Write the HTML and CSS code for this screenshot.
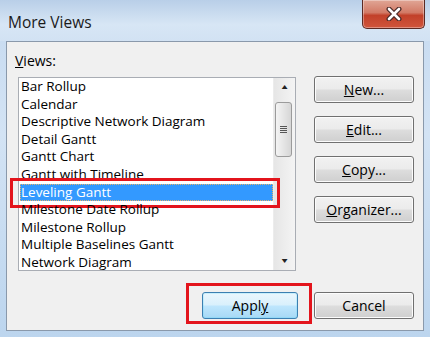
FILE: index.html
```html
<!DOCTYPE html>
<html lang="en">
<head>
  <meta charset="UTF-8">
  <title>More Views</title>
  <link rel="stylesheet" href="styles.css">
</head>
<body>

  <div class="window">
    <!-- Title bar -->
    <div class="titlebar">
      <span class="title">More Views</span>
      <div class="close">
        <svg width="18" height="14" viewBox="0 0 18 14">
          <path d="M4 2 L14 12 M14 2 L4 12" stroke="#4a2a28" stroke-width="5" stroke-linecap="round"/>
          <path d="M4 2 L14 12 M14 2 L4 12" stroke="#fff" stroke-width="2.6" stroke-linecap="round"/>
        </svg>
      </div>
    </div>

    <div class="client">
      <div class="main">
        <!-- List of views -->
        <div class="views">
          <div class="label"><u>V</u>iews:</div>
          <div class="listbox">
            <ul class="items">
              <li>Bar Rollup</li>
              <li>Calendar</li>
              <li>Descriptive Network Diagram</li>
              <li>Detail Gantt</li>
              <li>Gantt Chart</li>
              <li>Gantt with Timeline</li>
              <li class="selected">Leveling Gantt<span class="mark mark-row"></span></li>
              <li>Milestone Date Rollup</li>
              <li>Milestone Rollup</li>
              <li>Multiple Baselines Gantt</li>
              <li>Network Diagram</li>
            </ul>
            <div class="scrollbar">
              <div class="sb-arrow">&#9650;</div>
              <div class="sb-track">
                <div class="sb-thumb"><span class="grip"></span></div>
              </div>
              <div class="sb-arrow">&#9660;</div>
            </div>
          </div>
        </div>

        <!-- Side buttons -->
        <div class="side-buttons">
          <button class="btn"><u>N</u>ew...</button>
          <button class="btn"><u>E</u>dit...</button>
          <button class="btn"><u>C</u>opy...</button>
          <button class="btn"><u>O</u>rganizer...</button>
        </div>
      </div>

      <div class="footer">
        <button class="btn btn-default">Appl<u>y</u><span class="mark mark-apply"></span></button>
        <button class="btn btn-cancel">Cancel</button>
      </div>
    </div>
  </div>

</body>
</html>
```

FILE: styles.css
```css
body {
  margin: 0;
  font-family: "Open Sans", "Noto Sans", sans-serif;
  font-size: 14px;
  color: #000;
  background: #b9d3ee;
}

.window {
  width: 430px;
  height: 337px;
  display: flex;
  flex-direction: column;
  background: linear-gradient(to bottom, #c6daf0 0%, #d3e3f4 40%, #bcd5ee 100%);
  overflow: hidden;
}

/* Title bar */
.titlebar {
  height: 41px;
  display: flex;
  justify-content: space-between;
  align-items: flex-start;
  padding: 0 5px 0 8px;
  box-sizing: border-box;
  background: linear-gradient(to bottom, #b9cfe8 0%, #d7e6f5 60%, #d2e2f3 100%);
}

.title {
  margin-top: 13px;
  font-size: 15.5px;
  line-height: 18px;
  color: #1a1a1a;
}

.close {
  width: 63px;
  height: 29px;
  box-sizing: border-box;
  border: 1px solid #5b2a24;
  border-top: none;
  border-radius: 0 0 5px 5px;
  background: linear-gradient(to bottom, #e0a696 0%, #d27a66 45%, #c2412a 55%, #d0553c 100%);
  box-shadow: inset 0 0 0 1px rgba(255,255,255,0.35);
  display: flex;
  align-items: center;
  justify-content: center;
}

/* Client area */
.client {
  flex: 1;
  margin: 0 6px 6px 6px;
  border: 1px solid #8a99ab;
  background: #f0f0f0;
  padding: 10px 9px 11px 8px;
  display: flex;
  flex-direction: column;
}

.main {
  display: flex;
  gap: 18px;
}

.label {
  line-height: 17px;
  margin-bottom: 8px;
}

.listbox {
  position: relative;
  margin-left: 3px;
  width: 278px;
  height: 194px;
  box-sizing: border-box;
  border: 1px solid #a9adb4;
  background: #fff;
  display: flex;
}

.items {
  list-style: none;
  margin: 0;
  padding: 0 0 0 1px;
  flex: 1;
  font-size: 13.5px;
}

.items li {
  position: relative;
  height: 17.6px;
  line-height: 17.6px;
  padding-left: 1px;
  white-space: nowrap;
}

.items li.selected {
  background: #3399ff;
  color: #fff;
  outline: 1px dotted #e8b36a;
  outline-offset: -1px;
}

/* Red annotation boxes */
.mark {
  position: absolute;
  border: 3px solid #e3141c;
  pointer-events: none;
}

.mark-row {
  left: -10px;
  right: -7px;
  top: -6px;
  bottom: -7px;
}

.mark-apply {
  left: -18px;
  right: -16px;
  top: -10px;
  bottom: -6px;
}

/* Scrollbar */
.scrollbar {
  width: 21px;
  display: flex;
  flex-direction: column;
  background: linear-gradient(to right, #e6e6e6, #f4f4f4);
  border-left: 1px solid #ececec;
}

.sb-arrow {
  height: 18px;
  font-size: 7px;
  line-height: 18px;
  text-align: center;
  color: #222;
  transform: scaleX(1.4);
}

.sb-track {
  flex: 1;
  padding-top: 6px;
}

.sb-thumb {
  width: 17px;
  height: 55px;
  margin-left: 1px;
  box-sizing: border-box;
  border: 1px solid #9b9b9b;
  border-radius: 3px;
  background: linear-gradient(to right, #f4f4f4, #e2e2e2 60%, #d6d6d6);
  display: flex;
  align-items: center;
  justify-content: center;
}

.grip {
  width: 7px;
  height: 8px;
  background: repeating-linear-gradient(to bottom, #555 0 1px, transparent 1px 2px);
}

/* Buttons */
.side-buttons {
  display: flex;
  flex-direction: column;
  gap: 13px;
  padding-top: 24px;
}

.btn {
  position: relative;
  width: 100px;
  height: 27px;
  font-family: "Open Sans", "Noto Sans", sans-serif;
  font-size: 14px;
  color: #000;
  border: 1px solid #707070;
  border-radius: 3px;
  background: linear-gradient(to bottom, #f2f2f2 0%, #ebebeb 48%, #dddddd 52%, #cfcfcf 100%);
  box-shadow: inset 0 0 0 1px #fcfcfc;
  padding: 0;
}

.footer {
  margin-top: 21px;
  display: flex;
  justify-content: flex-end;
  gap: 16px;
}

.btn-default {
  width: 96px;
  border-color: #3c7fb1;
  background: linear-gradient(to bottom, #eaf6fd 0%, #d9f0fc 48%, #bee6fd 52%, #a7d9f5 100%);
  box-shadow: inset 0 0 0 1px #48d8fb33;
}

.btn-default .mark-apply {
  left: -17px;
  right: -15px;
}
```
